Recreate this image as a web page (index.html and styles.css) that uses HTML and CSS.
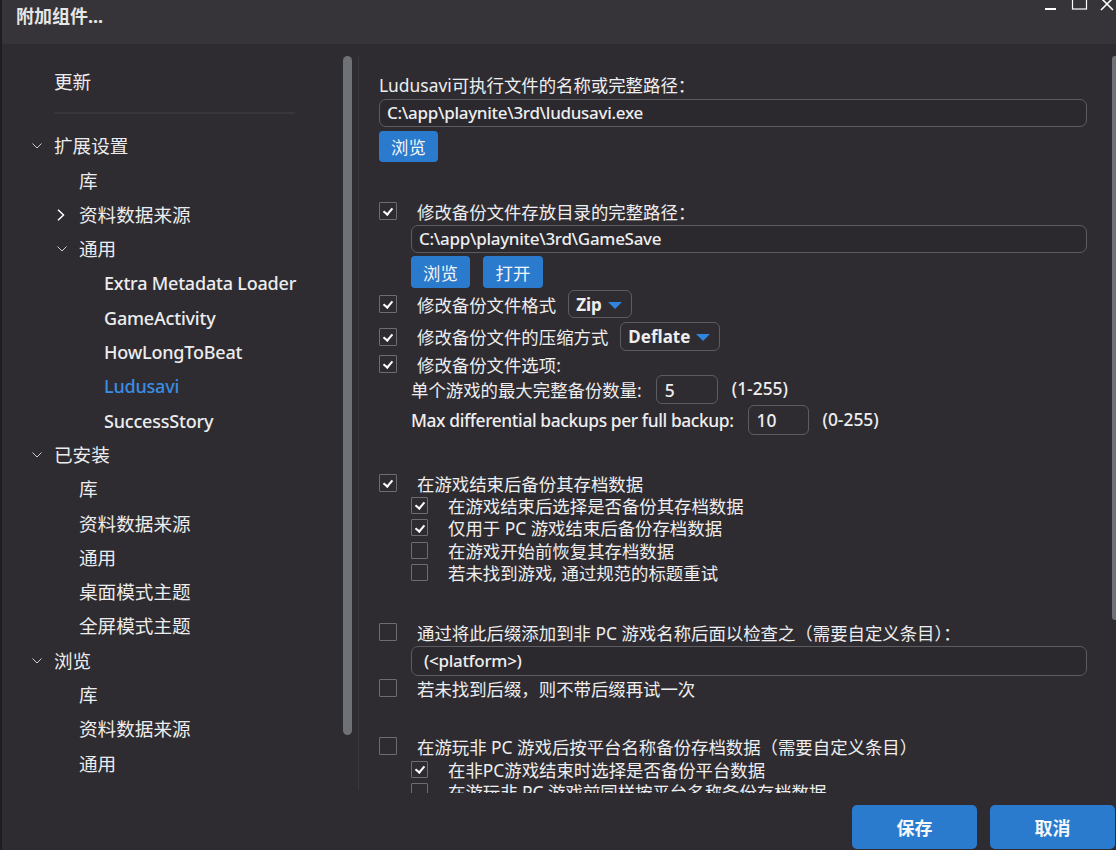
FILE: index.html
```html
<!DOCTYPE html>
<html lang="zh-CN">
<head>
<meta charset="utf-8">
<title>附加组件...</title>
<link rel="stylesheet" href="styles.css">
</head>
<body>
<div class="window">
  <header class="titlebar">
    <span class="title">附加组件...</span>
    <svg class="wincontrols" width="76" height="14" viewBox="0 0 76 14">
      <rect x="3" y="8" width="11" height="2" fill="#ffffff"/>
      <rect x="30.5" y="-3" width="14" height="12" fill="none" stroke="#ffffff" stroke-width="1.2"/>
      <path d="M59 -2 L71 10 M71 -2 L59 10" stroke="#ffffff" stroke-width="1.6"/>
    </svg>
  </header>
  <div class="main">
    <aside class="sidebar">
      <nav class="tree">
        <div class="row l0">更新</div>
        <div class="sep"></div>
        <div class="row l0"><svg class="chev" width="10" height="6" viewBox="0 0 10 6"><path d="M0.5 0.5 L5 5 L9.5 0.5" fill="none" stroke="#cfcfd2" stroke-width="1"/></svg>扩展设置</div>
        <div class="row l1">库</div>
        <div class="row l1"><svg class="chev right" width="10" height="12" viewBox="0 0 10 12"><path d="M1 0.8 L6.5 6 L1 11.2" fill="none" stroke="#ffffff" stroke-width="1.5"/></svg>资料数据来源</div>
        <div class="row l1"><svg class="chev" width="10" height="6" viewBox="0 0 10 6"><path d="M0.5 0.5 L5 5 L9.5 0.5" fill="none" stroke="#cfcfd2" stroke-width="1"/></svg>通用</div>
        <div class="row l2 latin">Extra Metadata Loader</div>
        <div class="row l2 latin">GameActivity</div>
        <div class="row l2 latin">HowLongToBeat</div>
        <div class="row l2 latin active">Ludusavi</div>
        <div class="row l2 latin">SuccessStory</div>
        <div class="row l0"><svg class="chev" width="10" height="6" viewBox="0 0 10 6"><path d="M0.5 0.5 L5 5 L9.5 0.5" fill="none" stroke="#cfcfd2" stroke-width="1"/></svg>已安装</div>
        <div class="row l1">库</div>
        <div class="row l1">资料数据来源</div>
        <div class="row l1">通用</div>
        <div class="row l1">桌面模式主题</div>
        <div class="row l1">全屏模式主题</div>
        <div class="row l0"><svg class="chev" width="10" height="6" viewBox="0 0 10 6"><path d="M0.5 0.5 L5 5 L9.5 0.5" fill="none" stroke="#cfcfd2" stroke-width="1"/></svg>浏览</div>
        <div class="row l1">库</div>
        <div class="row l1">资料数据来源</div>
        <div class="row l1">通用</div>
      </nav>
      <div class="vscroll side"><div class="thumb"></div></div>
    </aside>
    <section class="content">
      <div class="form">
        <div class="label first">Ludusavi可执行文件的名称或完整路径<span class="fw">：</span></div>
        <div class="textbox">C:\app\playnite\3rd\ludusavi.exe</div>
        <div class="btnrow b1"><button class="btn">浏览</button></div>

        <div class="check-row cr1"><span class="cb on"></span><span class="cl">修改备份文件存放目录的完整路径<span class="fw">：</span></span></div>
        <div class="indent">
          <div class="textbox t2">C:\app\playnite\3rd\GameSave</div>
          <div class="btnrow b2"><button class="btn">浏览</button><button class="btn">打开</button></div>
        </div>
        <div class="check-row cr-format"><span class="cb on"></span><span class="cl">修改备份文件格式</span><span class="dropdown">Zip<i class="tri"></i></span></div>
        <div class="check-row cr-comp"><span class="cb on"></span><span class="cl">修改备份文件的压缩方式</span><span class="dropdown">Deflate<i class="tri"></i></span></div>
        <div class="check-row cr-opt"><span class="cb on"></span><span class="cl">修改备份文件选项:</span></div>
        <div class="indent">
          <div class="num-row n1"><span>单个游戏的最大完整备份数量:</span><span class="numbox">5</span><span class="range">(1-255)</span></div>
          <div class="num-row n2"><span class="latin tight">Max differential backups per full backup:</span><span class="numbox">10</span><span class="range">(0-255)</span></div>
        </div>

        <div class="check-row gap"><span class="cb on"></span><span class="cl">在游戏结束后备份其存档数据</span></div>
        <div class="indent">
          <div class="sub-row"><span class="cb small on"></span><span class="cl">在游戏结束后选择是否备份其存档数据</span></div>
          <div class="sub-row"><span class="cb small on"></span><span class="cl">仅用于 PC 游戏结束后备份存档数据</span></div>
          <div class="sub-row"><span class="cb small"></span><span class="cl">在游戏开始前恢复其存档数据</span></div>
          <div class="sub-row"><span class="cb small"></span><span class="cl">若未找到游戏, 通过规范的标题重试</span></div>
        </div>

        <div class="check-row gap"><span class="cb"></span><span class="cl">通过将此后缀添加到非 PC 游戏名称后面以检查之（需要自定义条目）<span class="fw">：</span></span></div>
        <div class="indent">
          <div class="textbox t3">(&lt;platform&gt;)</div>
        </div>
        <div class="check-row cr-retry"><span class="cb"></span><span class="cl">若未找到后缀，则不带后缀再试一次</span></div>

        <div class="check-row gap g3"><span class="cb"></span><span class="cl">在游玩非 PC 游戏后按平台名称备份存档数据（需要自定义条目）</span></div>
        <div class="indent">
          <div class="sub-row s1"><span class="cb small on"></span><span class="cl">在非PC游戏结束时选择是否备份平台数据</span></div>
          <div class="sub-row"><span class="cb small"></span><span class="cl">在游玩非 PC 游戏前同样按平台名称备份存档数据</span></div>
        </div>
      </div>
      <div class="vscroll main-scroll"><div class="thumb"></div></div>
    </section>
  </div>
  <footer class="footer">
    <button class="big-btn">保存</button>
    <button class="big-btn">取消</button>
  </footer>
</div>
</body>
</html>
```

FILE: styles.css
```css
* { box-sizing: border-box; }
html, body { margin: 0; padding: 0; }
body {
  width: 1116px;
  height: 850px;
  overflow: hidden;
  background: #2e2c31;
  color: #eeeeef;
  font-family: "Noto Sans", "Noto Sans CJK SC", sans-serif;
}
.window {
  width: 1116px;
  height: 850px;
  display: flex;
  flex-direction: column;
  border-left: 2px solid #1e1d21;
  background: #2e2c31;
}
.titlebar {
  height: 44px;
  flex: none;
  background: #363439;
  display: flex;
  align-items: flex-start;
  padding-left: 14px;
}
.title {
  font-size: 18px;
  font-weight: bold;
  color: #e6e6e6;
  line-height: 22px;
  margin-top: 5px;
}
.wincontrols {
  margin-left: auto;
  margin-right: -2px;
  margin-top: 0;
}
.main {
  flex: 1;
  display: flex;
  min-height: 0;
  overflow: hidden;
}
.sidebar {
  width: 357px;
  flex: none;
  display: flex;
  margin-top: 12px;
  margin-bottom: 3px;
  border-right: 1px solid #3a383e;
}
.tree {
  flex: 1;
  padding-top: 9px;
  font-size: 18.6px;
  color: #ececee;
}
.row {
  height: 34.3px;
  line-height: 34.3px;
  display: flex;
  align-items: center;
  white-space: nowrap;
}
.row.l0 { padding-left: 52px; }
.row.l1 { padding-left: 77px; }
.row.l2 { padding-left: 102px; }
.latin { font-weight: 500; }
.row.latin { font-size: 18px; letter-spacing: -0.2px; }
.tight { letter-spacing: -0.4px; }
.row.active { color: #3a8de3; }
.fw { font-family: "Noto Sans CJK TC", "Noto Sans CJK SC", sans-serif; }
.chev {
  flex: none;
  margin-left: -22px;
  margin-right: 12px;
}
.sep {
  height: 2px;
  background: #38363c;
  margin: 13px 0 15px 52px;
  width: 241px;
}
.vscroll.side {
  width: 15px;
  flex: none;
}
.vscroll.side .thumb {
  width: 9px;
  height: 679px;
  border-radius: 5px;
  background: #6e7175;
}
.content {
  flex: 1;
  display: flex;
  min-width: 0;
  overflow: hidden;
}
.form {
  flex: 1;
  padding: 30px 25px 0 20px;
  font-size: 17.4px;
  overflow: hidden;
}
.vscroll.main-scroll {
  width: 4px;
  flex: none;
}
.vscroll.main-scroll .thumb {
  margin-top: 12px;
  height: 564px;
  width: 4px;
  border-radius: 3px 0 0 3px;
  background: #6e7175;
}
.label { line-height: 22px; height: 22px; white-space: nowrap; }
.textbox {
  height: 28px;
  margin-top: 3px;
  border: 1px solid #5d5c61;
  border-radius: 7px;
  background: #2b292e;
  padding-left: 7px;
  line-height: 26px;
  font-weight: 500;
  font-size: 17px;
  letter-spacing: -0.3px;
  white-space: nowrap;
}
.textbox.t3 { height: 30px; line-height: 28px; padding-left: 12px; }
.btnrow { display: flex; gap: 13px; }
.btnrow.b1 { margin-top: 4px; }
.btnrow.b1 .btn { height: 31px; }
.btnrow.b2 { margin-top: 3px; }
.btn {
  height: 32px;
  width: 59px;
  border: none;
  border-radius: 4px;
  background: #2a7bcd;
  color: #f2f4f8;
  font-family: inherit;
  font-size: 17.4px;
  padding: 0;
}
.btnrow.b2 .btn + .btn { width: 60px; }
.check-row {
  display: flex;
  align-items: center;
  height: 22px;
  white-space: nowrap;
}
.cr1 { margin-top: 38px; }
.cr-format { height: 28px; margin-top: 2px; }
.cr-comp { height: 29px; margin-top: 4px; }
.cr-opt { margin-top: 2px; }
.cr-retry { margin-top: 1px; }
.check-row.gap { margin-top: 37px; }
.check-row.g3 { margin-top: 36px; }
.cb {
  flex: none;
  width: 18px;
  height: 18px;
  border: 1px solid #6d6c71;
  border-radius: 1px;
  margin-right: 20px;
  position: relative;
}
.cb.small { width: 17px; height: 17px; margin-right: 20px; }
.cb.on::after {
  content: "";
  position: absolute;
  left: 5px;
  top: 3px;
  width: 4px;
  height: 7px;
  border: solid #ffffff;
  border-width: 0 2px 2px 0;
  transform: rotate(40deg);
}
.cb.small.on::after { left: 5px; top: 2.5px; }
.indent { padding-left: 32px; }
.dropdown {
  display: inline-flex;
  align-items: center;
  height: 100%;
  margin-left: 12px;
  padding: 0 9px 0 7px;
  border: 1px solid #5d5c61;
  border-radius: 6px;
  font-weight: bold;
  font-size: 17px;
}
.tri {
  width: 0;
  height: 0;
  margin-left: 6px;
  border-left: 7px solid transparent;
  border-right: 7px solid transparent;
  border-top: 7px solid #2e86de;
  margin-top: 2px;
}
.num-row {
  display: flex;
  align-items: center;
  white-space: nowrap;
  height: 29px;
}
.num-row.n2 { height: 30px; margin-top: 1px; }
.numbox {
  height: 100%;
  width: 62px;
  margin-left: 14px;
  border: 1px solid #5d5c61;
  border-radius: 6px;
  padding-left: 8px;
  display: flex;
  align-items: center;
  font-weight: 500;
}
.n2 .numbox { width: 61px; }
.range { margin-left: 14px; font-weight: 500; margin-top: -3px; }
.sub-row {
  display: flex;
  align-items: center;
  height: 22.5px;
  white-space: nowrap;
}
.sub-row.s1 { margin-top: 1px; }
.footer {
  height: 57px;
  flex: none;
  display: flex;
  justify-content: flex-end;
  gap: 13px;
  padding: 12px 1px 0 0;
}
.big-btn {
  width: 125px;
  height: 44px;
  border: none;
  border-radius: 5px;
  background: #2a7bcd;
  color: #f4f6fa;
  font-family: inherit;
  font-size: 18px;
  font-weight: bold;
  padding: 0;
}
```
